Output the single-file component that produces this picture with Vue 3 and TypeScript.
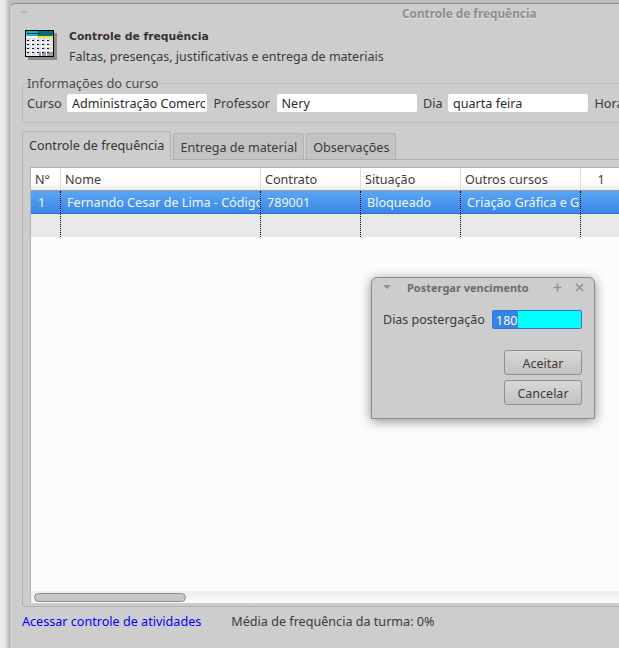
<template>
  <div class="desktop">
    <div class="window">
      <div class="titlebar">
        <span class="menu-arrow"></span>
        <span class="title">Controle de frequência</span>
      </div>

      <header class="head">
        <svg class="cal" width="32" height="30" viewBox="0 0 32 30">
          <rect x="3" y="3" width="29" height="27" fill="#8a8a8a" />
          <rect x="0" y="0" width="29" height="27" fill="#000" />
          <rect x="1" y="1" width="27" height="5" fill="#12b6c4" />
          <rect x="13" y="1" width="15" height="5" fill="#0b6f78" />
          <rect x="2" y="3" width="13" height="1" fill="#053a40" />
          <rect x="1" y="6" width="27" height="2" fill="#fff" />
          <rect x="12" y="6" width="16" height="2" fill="#f3e13a" />
          <rect x="1" y="8" width="27" height="18" fill="#dedede" />
          <rect x="14" y="22" width="14" height="4" fill="#9a9a9a" />
          <g fill="#fff">
            <rect x="1" y="12" width="27" height="1" />
            <rect x="1" y="16" width="27" height="1" />
            <rect x="1" y="20" width="27" height="1" />
            <rect x="6" y="8" width="1" height="18" />
            <rect x="11" y="8" width="1" height="18" />
            <rect x="16" y="8" width="1" height="18" />
            <rect x="21" y="8" width="1" height="18" />
          </g>
          <g fill="#11117a">
            <template v-for="r in 4" :key="r">
              <rect v-for="c in 5" :key="c" :x="c * 5 - 3" :y="r * 4 + 6" width="2" height="1" />
            </template>
          </g>
        </svg>
        <div class="head-text">
          <div class="head-title">Controle de frequência</div>
          <div class="head-sub">Faltas, presenças, justificativas e entrega de materiais</div>
        </div>
      </header>

      <fieldset class="info">
        <legend>Informações do curso</legend>
        <label class="l-curso">Curso</label>
        <div class="field">Administração Comercial</div>
        <label class="l-prof">Professor</label>
        <div class="field">Nery</div>
        <label class="l-dia">Dia</label>
        <div class="field">quarta feira</div>
        <label>Horário</label>
      </fieldset>

      <div class="tabs">
        <div
          v-for="(t, i) in tabs"
          :key="t"
          class="tab"
          :class="{ active: i === 0 }"
        >{{ t }}</div>
      </div>

      <div class="pane">
        <div class="table">
          <div class="row header">
            <div v-for="c in columns" :key="c.label" class="cell" :style="{ width: c.width + 'px' }" :class="c.cls">{{ c.label }}</div>
          </div>
          <div class="row selected">
            <div v-for="(c, i) in columns" :key="c.label" class="cell" :style="{ width: c.width + 'px' }">{{ rowData[i] }}</div>
          </div>
          <div class="row empty">
            <div v-for="c in columns" :key="c.label" class="cell" :style="{ width: c.width + 'px' }"></div>
          </div>
          <div class="spacer"></div>
          <div class="scrollbar"><div class="thumb"></div></div>
        </div>
      </div>

      <footer class="foot">
        <a class="link">Acessar controle de atividades</a>
        <span>Média de frequência da turma: 0%</span>
      </footer>
    </div>

    <div class="dialog">
      <div class="dlg-title">
        <span class="menu-arrow dark"></span>
        <span class="dlg-name">Postergar vencimento</span>
        <svg class="dlg-ico" width="11" height="11" viewBox="0 0 11 11"><path d="M5.5 1.5v8M1.5 5.5h8" stroke="#929292" stroke-width="1.5" /></svg>
        <svg class="dlg-ico" width="11" height="11" viewBox="0 0 11 11"><path d="M2 2l7 7M9 2l-7 7" stroke="#929292" stroke-width="1.6" /></svg>
      </div>
      <div class="dlg-row">
        <span>Dias postergação</span>
        <div class="dlg-input"><span class="sel">180</span></div>
      </div>
      <div class="dlg-buttons">
        <button>Aceitar</button>
        <button>Cancelar</button>
      </div>
    </div>
  </div>
</template>

<script setup lang="ts">
interface Column { label: string; width: number; cls?: string }

const tabs = ['Controle de frequência', 'Entrega de material', 'Observações']

const columns: Column[] = [
  { label: 'N°', width: 29 },
  { label: 'Nome', width: 200 },
  { label: 'Contrato', width: 100 },
  { label: 'Situação', width: 100 },
  { label: 'Outros cursos', width: 120 },
  { label: '1', width: 41, cls: 'center' },
]

const rowData = ['1', 'Fernando Cesar de Lima - Código 1234', '789001', 'Bloqueado', 'Criação Gráfica e Games', '']
</script>

<style>
html, body { margin: 0; background: #e9e9e9; }
</style>

<style scoped>
.desktop {
  position: relative;
  width: 619px;
  height: 648px;
  overflow: hidden;
  background: linear-gradient(90deg, #ededed 0, #e6e6e6 5px, #bdbdbd 9px);
  font-family: "Noto Sans", "Open Sans", sans-serif;
  font-size: 12.6px;
  color: #3f3a36;
}
.window {
  box-sizing: border-box;
  margin: 3px 0 0 9px;
  width: 700px;
  height: 645px;
  background: #cdcdcd;
  border-top: 1px solid #8f8f8f;
  border-left: 1px solid #b4b4b4;
  border-top-left-radius: 6px;
  padding: 0 0 0 12px;
}
.titlebar {
  display: flex;
  height: 18px;
  align-items: center;
  position: relative;
}
.menu-arrow {
  width: 0;
  height: 0;
  border: 4px solid transparent;
  border-top: 4px solid #b9b9b9;
  border-bottom: 0;
  margin: 0 0 0 -2px;
}
.menu-arrow.dark { border-top-color: #8f8f8f; }
.title {
  position: absolute;
  left: 380px;
  top: 1px;
  font: bold 11.8px "Noto Sans", sans-serif;
  color: #8e8e8e;
  text-shadow: 0 1px 0 #e2e2e2;
}
.head { display: flex; gap: 12px; margin: 5px 0 0 3px; height: 50px; }
.cal { display: block; margin-top: 3px; flex: none; }
.head-title {
  font: bold 10.8px "DejaVu Sans", sans-serif;
  color: #37322e;
  margin-top: 3px;
  line-height: 14px;
}
.head-sub { margin-top: 4px; line-height: 18px; font-size: 12.5px; }

.info {
  box-sizing: border-box;
  margin: 0;
  height: 46px;
  width: 680px;
  padding: 4px 0 0 4px;
  border: 1px solid #bcbcbc;
  border-radius: 3px;
  display: flex;
  align-items: flex-start;
  min-width: 0;
}
.info legend {
  padding: 0;
  margin-left: 0;
  font-size: 12.8px;
  line-height: 13px;
  color: #4d4a48;
}
.info label { flex: none; line-height: 19px; white-space: nowrap; }
.l-curso { width: 40px; }
.l-prof { width: 63px; }
.l-dia { width: 25px; }
.field {
  box-sizing: border-box;
  flex: none;
  width: 140px;
  height: 18px;
  background: #fff;
  border-right: 2px solid #fff;
  border-radius: 2px;
  padding: 1px 0 0 5px;
  line-height: 18px;
  overflow: hidden;
  white-space: nowrap;
  margin-right: 6.5px;
  color: #2b2b2b;
}

.tabs {
  display: flex;
  align-items: flex-end;
  margin-top: 8px;
  height: 28px;
  gap: 2px;
  position: relative;
  z-index: 1;
}
.tab {
  box-sizing: border-box;
  height: 26px;
  padding: 0 6px;
  line-height: 27px;
  background: #c3c3c3;
  border: 1px solid #b3b3b3;
  border-bottom: 0;
  border-radius: 3px 3px 0 0;
}
.tab.active {
  height: 29px;
  line-height: 27px;
  background: #cdcdcd;
  margin-bottom: -1px;
  border-color: #b6b6b6;
  color: #3a3531;
}
.pane {
  box-sizing: border-box;
  width: 680px;
  height: 448px;
  padding: 7px 0 3px 7px;
  border: 1px solid #b0b0b0;
  border-radius: 0 3px 3px 3px;
}
.table {
  box-sizing: border-box;
  height: 100%;
  display: flex;
  flex-direction: column;
  background: #fcfcfc;
  border: 1px solid #b2b2b2;
  border-right: 0;
  border-bottom: 0;
}
.row { display: flex; flex: none; }
.cell {
  box-sizing: border-box;
  flex: none;
  padding-left: 5px;
  overflow: hidden;
  white-space: nowrap;
}
.cell + .cell { border-left: 1px dotted #000; }
.header {
  height: 23px;
  line-height: 22px;
  background: linear-gradient(#ffffff, #ffffff 60%, #ececec);
  border-bottom: 1px solid #9c9c9c;
  box-sizing: border-box;
}
.header .cell { padding-left: 4px; padding-top: 1px; }
.header .cell + .cell { border-left: 1px solid #dcdcdc; padding-left: 4px; }
.header .cell.center { text-align: center; padding-left: 0; }
.selected {
  height: 23px;
  line-height: 22px;
  color: #eef6ff;
  background: linear-gradient(#5aa6f4, #3a86e6);
  border-bottom: 1px solid #2e73c9;
  box-sizing: border-box;
}
.selected .cell { padding: 1px 0 0 7px; }
.selected .cell + .cell { padding-left: 6px; }
.empty { height: 23px; background: #e9e9e9; }
.spacer { flex: 1; }
.scrollbar {
  flex: none;
  height: 12px;
  box-sizing: border-box;
  padding: 2px 0 0 3px;
  background: linear-gradient(#ededed, #fbfbfb);
}
.thumb {
  box-sizing: border-box;
  width: 152px;
  height: 9px;
  border: 1px solid #8c8c8c;
  border-radius: 5px;
  background: #c6c6c6;
}
.foot {
  display: flex;
  gap: 30px;
  margin-top: 6px;
  line-height: 18px;
}
.link { color: #0000ff; }

.dialog {
  position: absolute;
  left: 371px;
  top: 277px;
  box-sizing: border-box;
  width: 224px;
  height: 142px;
  background: #cdcdcd;
  border: 1px solid #8c8c8c;
  border-radius: 6px 6px 0 0;
  box-shadow: 0 2px 12px rgba(0, 0, 0, .45);
  padding: 0 12px 0 11px;
  font-size: 12.5px;
}
.dlg-title {
  display: flex;
  align-items: center;
  height: 18px;
  gap: 8px;
}
.dlg-title .menu-arrow { margin: 0; flex: none; }
.dlg-name {
  flex: none;
  font: bold 11px "Noto Sans", sans-serif;
  color: #6f6b68;
  width: 128px;
  margin-left: 8px;
  margin-right: 6px;
  white-space: nowrap;
}
.dlg-ico { flex: none; margin-left: 3px; }
.dlg-row {
  display: flex;
  align-items: center;
  justify-content: space-between;
  margin-top: 14px;
}
.dlg-input {
  box-sizing: border-box;
  width: 90px;
  height: 19px;
  background: #00ffff;
  border: 1px solid #2f78d6;
  border-radius: 2px;
}
.sel {
  display: inline-block;
  height: 17px;
  line-height: 19px;
  padding: 0 1px 0 3px;
  background: #3584e4;
  color: #fff;
  vertical-align: top;
}
.dlg-buttons {
  display: flex;
  flex-direction: column;
  align-items: flex-end;
  gap: 5px;
  margin-top: 21px;
}
.dlg-buttons button {
  box-sizing: border-box;
  width: 78px;
  height: 25px;
  padding: 2px 0 0;
  font: inherit;
  color: #3f3a36;
  background: linear-gradient(#d8d8d8, #c2c2c2);
  border: 1px solid #8f8f8f;
  border-radius: 3px;
}
</style>
